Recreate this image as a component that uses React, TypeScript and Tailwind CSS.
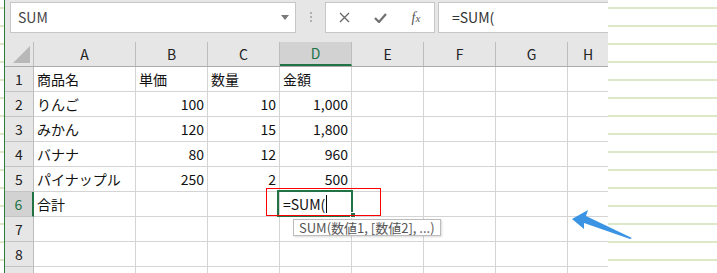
import React from "react";

type Cell = { text?: string; align?: "left" | "right" };

const FONT = { fontFamily: '"Noto Sans CJK JP", "Liberation Sans", sans-serif' };

const colLetters = ["A", "B", "C", "D", "E", "F", "G", "H"];
const colWidths = [
  "w-[102px]",
  "w-[72px]",
  "w-[72px]",
  "w-[72px]",
  "w-[72px]",
  "w-[72px]",
  "w-[72px]",
  "flex-1",
];

const L = (text: string): Cell => ({ text, align: "left" });
const R = (text: string): Cell => ({ text, align: "right" });

const rows: Cell[][] = [
  [L("商品名"), L("単価"), L("数量"), L("金額")],
  [L("りんご"), R("100"), R("10"), R("1,000")],
  [L("みかん"), R("120"), R("15"), R("1,800")],
  [L("バナナ"), R("80"), R("12"), R("960")],
  [L("パイナップル"), R("250"), R("2"), R("500")],
  [L("合計"), {}, {}, L("=SUM(")],
  [],
  [],
  [],
];

function Toolbar() {
  return (
    <div className="flex h-[42px] items-start bg-[#e6e6e6] pt-[2px]">
      <div className="ml-[5px] flex h-[31px] w-[286px] items-center justify-between border border-[#c6c6c6] bg-white pl-[7px] pr-[6px]">
        <span className="text-[14px] text-[#444]">SUM</span>
        <svg width="8" height="5" viewBox="0 0 8 5">
          <path d="M0 0 L8 0 L4 5 Z" fill="#7a7a7a" />
        </svg>
      </div>
      <div className="flex w-[29px] flex-col items-center gap-[2px] pt-[10px]">
        <span className="h-[2px] w-[2px] bg-[#b0b0b0]" />
        <span className="h-[2px] w-[2px] bg-[#b0b0b0]" />
        <span className="h-[2px] w-[2px] bg-[#b0b0b0]" />
      </div>
      <div className="flex h-[31px] w-[110px] items-center border border-[#c6c6c6] bg-white">
        <div className="flex w-[36px] justify-center">
          <svg width="11" height="11" viewBox="0 0 11 11">
            <path d="M1 1 L10 10 M10 1 L1 10" stroke="#666" strokeWidth="1.3" />
          </svg>
        </div>
        <div className="flex w-[36px] justify-center">
          <svg width="13" height="10" viewBox="0 0 13 10">
            <path d="M1 5 L5 9 L12 1" stroke="#707070" strokeWidth="2.2" fill="none" />
          </svg>
        </div>
        <div
          className="flex w-[36px] justify-center text-[14px] italic text-[#555]"
          style={{ fontFamily: '"Liberation Serif", serif' }}
        >
          f<span className="mt-[3px] text-[11px]">x</span>
        </div>
      </div>
      <div className="ml-[3px] flex h-[31px] flex-1 items-center border-y border-l border-[#c6c6c6] bg-white pl-[13px]">
        <span className="text-[14px] text-[#333]">=SUM(</span>
      </div>
    </div>
  );
}

function HeaderRow() {
  return (
    <div className="flex h-[25px] border-b border-[#ababab] bg-[#e6e6e6]">
      <div className="relative w-[29px] border-r border-[#bdbdbd]">
        <svg className="absolute left-[8px] top-[4px]" width="18" height="18" viewBox="0 0 18 18">
          <path d="M0 17 L17 0 L17 17 Z" fill="#b8b8b8" />
        </svg>
      </div>
      {colLetters.map((c, i) => (
        <div
          key={c}
          className={`${colWidths[i]} flex items-center justify-center text-[14px] ${
            c === "D"
              ? "border-b-2 border-r border-b-[#217346] border-r-[#bdbdbd] bg-[#d2d2d2] text-[#217346]"
              : i === 7
              ? "text-[#222]"
              : "border-r border-[#bdbdbd] text-[#222]"
          }`}
        >
          {c}
        </div>
      ))}
    </div>
  );
}

function GridRow({ n, cells }: { n: number; cells: Cell[] }) {
  const active = n === 6;
  return (
    <div className="flex h-[25px]">
      <div
        className={`flex w-[29px] items-center justify-center border-b border-[#c4c4c4] text-[14px] ${
          active
            ? "border-r-2 border-r-[#217346] bg-[#d2d2d2] text-[#217346]"
            : "border-r border-r-[#bdbdbd] bg-[#e6e6e6] text-[#222]"
        }`}
      >
        {n < 9 ? n : ""}
      </div>
      {colLetters.map((c, i) => {
        const cell = cells[i] || {};
        return (
          <div
            key={c}
            className={`${colWidths[i]} flex items-center overflow-hidden whitespace-nowrap border-b border-[#d4d4d4] px-[3px] text-[14px] text-[#111] ${
              i === 7 ? "" : "border-r"
            } ${cell.align === "right" ? "justify-end" : "justify-start"}`}
          >
            {cell.text}
            {active && c === "D" && <span className="ml-[1px] h-[18px] w-px bg-black" />}
          </div>
        );
      })}
    </div>
  );
}

export default function App() {
  return (
    <div
      className="relative flex h-[273px] w-[717px] overflow-hidden bg-white bg-[repeating-linear-gradient(to_bottom,transparent_0px,transparent_7px,#dde9c6_7px,#dde9c6_9px,transparent_9px,transparent_18px)]"
      style={FONT}
    >
      <div className="ml-[4px] w-px bg-[#2f7d3e]" />
      <div className="relative h-full w-[603px] overflow-hidden bg-white">
        <Toolbar />
        <HeaderRow />
        {rows.map((cells, i) => (
          <GridRow key={i} n={i + 1} cells={cells} />
        ))}

        {/* active cell D6 */}
        <div className="absolute left-[272px] top-[190px] h-[27px] w-[76px] border-2 border-[#217346]" />
        <div className="absolute left-[345px] top-[212px] h-[6px] w-[6px] border border-white bg-[#217346]" />

        {/* function hint */}
        <div className="absolute left-[288px] top-[219px] flex h-[17px] items-center border border-[#bcbcbc] bg-white px-[5px] text-[13px] text-[#555] shadow-[1px_1px_2px_rgba(0,0,0,0.15)]">
          SUM(数値1, [数値2], ...)
        </div>

        {/* red highlight */}
        <div className="absolute left-[261px] top-[188px] h-[28px] w-[115px] border border-[#ff0000]" />
      </div>

      <svg className="absolute left-[568px] top-[208px]" width="70" height="34" viewBox="0 0 70 34">
        <path d="M4 11 L20 2 L18 8 L64 30 L62 31 L16 15 L16 21 Z" fill="#3b94e3" />
      </svg>
    </div>
  );
}
